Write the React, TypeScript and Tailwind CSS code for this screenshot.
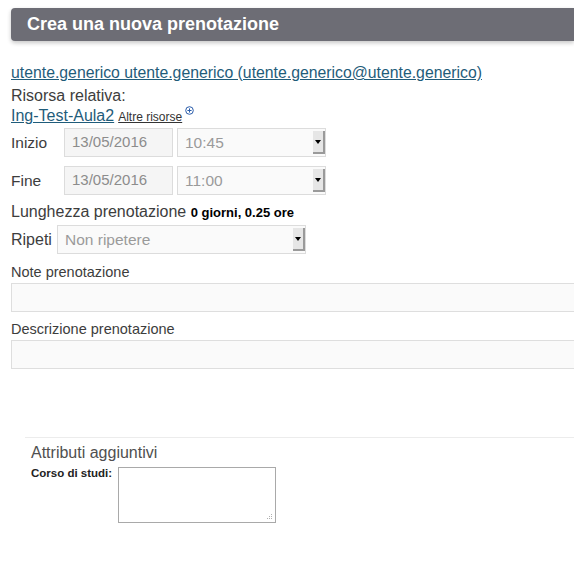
import React from 'react';

const Arrow: React.FC = () => (
  <div className="flex h-full w-[12px] items-center justify-center border-r-2 border-b-2 border-[#9a9a9a] bg-[#e6e6e6]">
    <div className="h-0 w-0 border-x-[3px] border-t-[4px] border-x-transparent border-t-black" />
  </div>
);

const Select: React.FC<{ value: string; className: string }> = ({ value, className }) => (
  <div className={`flex items-stretch border border-[#dcdcdc] bg-[#fafafa] ${className}`}>
    <span className="flex flex-1 items-center pl-[7px] text-[15.5px] text-[#9a9a9a]">{value}</span>
    <div className="py-[2px]">
      <Arrow />
    </div>
  </div>
);

const DateBox: React.FC<{ value: string }> = ({ value }) => (
  <div className="flex h-[29px] w-[109px] items-center border border-[#dcdcdc] bg-[#f5f5f5] pl-[7px] text-[15px] text-[#8c8c8c]">
    {value}
  </div>
);

export default function App() {
  return (
    <div className="h-[563px] w-[574px] overflow-hidden bg-white font-['Liberation_Sans',Arial,sans-serif] text-[#3d3d3d]">
      <div className="pl-[11px] pt-[8px]">
        <div className="flex h-[33px] items-center rounded-l-[4px] bg-[#6d6d75] pl-[16px] shadow-[0_2px_4px_rgba(0,0,0,0.22)]">
          <h1 className="text-[18px] font-bold text-white">Crea una nuova prenotazione</h1>
        </div>
      </div>

      <div className="px-[11px] pt-[20px]">
        <a className="text-[15.8px] leading-[20px] text-[#1f5c7a] underline">
          utente.generico utente.generico (utente.generico@utente.generico)
        </a>
        <div className="text-[16px] leading-[21px]">Risorsa relativa:</div>
        <div className="flex items-baseline leading-[20px]">
          <a className="text-[16px] text-[#1f5c7a] underline">Ing-Test-Aula2</a>
          <a className="ml-[4px] text-[12px] text-[#333] underline">Altre risorse</a>
          <svg className="ml-[3px] -translate-y-[6px]" width="9" height="9" viewBox="0 0 9 9">
            <circle cx="4.5" cy="4.5" r="3.8" fill="none" stroke="#2a5caa" strokeWidth="1" />
            <path d="M4.5 2.4v4.2M2.4 4.5h4.2" stroke="#2a5caa" strokeWidth="1" />
          </svg>
        </div>

        <div className="mt-[1px] flex items-center">
          <span className="w-[53px] text-[15.5px]">Inizio</span>
          <DateBox value="13/05/2016" />
          <Select value="10:45" className="ml-[4px] h-[29px] w-[149px]" />
        </div>
        <div className="mt-[9px] flex items-center">
          <span className="w-[53px] text-[15.5px]">Fine</span>
          <DateBox value="13/05/2016" />
          <Select value="11:00" className="ml-[4px] h-[29px] w-[149px]" />
        </div>

        <div className="mt-[7px] text-[16px] leading-[20px]">
          Lunghezza prenotazione <span className="text-[13px] font-bold text-black">0 giorni, 0.25 ore</span>
        </div>

        <div className="mt-[2px] flex items-center">
          <span className="w-[46px] text-[16px]">Ripeti</span>
          <Select value="Non ripetere" className="h-[29px] w-[249px]" />
        </div>

        <div className="mt-[7px] text-[14.5px] leading-[22px]">Note prenotazione</div>
        <div className="-mr-[11px] h-[29px] border border-[#dedede] border-r-0 bg-[#fafafa]" />
        <div className="mt-[6px] text-[14.5px] leading-[22px]">Descrizione prenotazione</div>
        <div className="-mr-[11px] h-[29px] border border-[#dedede] border-r-0 bg-[#fafafa]" />
      </div>

      <div className="ml-[25px] mt-[68px] border-t border-[#ececec] pl-[6px] pt-[5px]">
        <div className="text-[16px] leading-[20px] text-[#505050]">Attributi aggiuntivi</div>
        <div className="mt-[4px] flex items-start">
          <span className="w-[87px] text-[11.5px] font-bold leading-[13px] text-[#222]">Corso di studi:</span>
          <div className="relative h-[56px] w-[158px] border border-[#a9a9a9] bg-white">
            <svg className="absolute bottom-[2px] right-[2px]" width="7" height="7" viewBox="0 0 7 7">
              <g fill="#b0b0b0">
                <rect x="5" y="1" width="1" height="1" />
                <rect x="3" y="3" width="1" height="1" />
                <rect x="5" y="3" width="1" height="1" />
                <rect x="1" y="5" width="1" height="1" />
                <rect x="3" y="5" width="1" height="1" />
                <rect x="5" y="5" width="1" height="1" />
              </g>
            </svg>
          </div>
        </div>
      </div>
    </div>
  );
}
